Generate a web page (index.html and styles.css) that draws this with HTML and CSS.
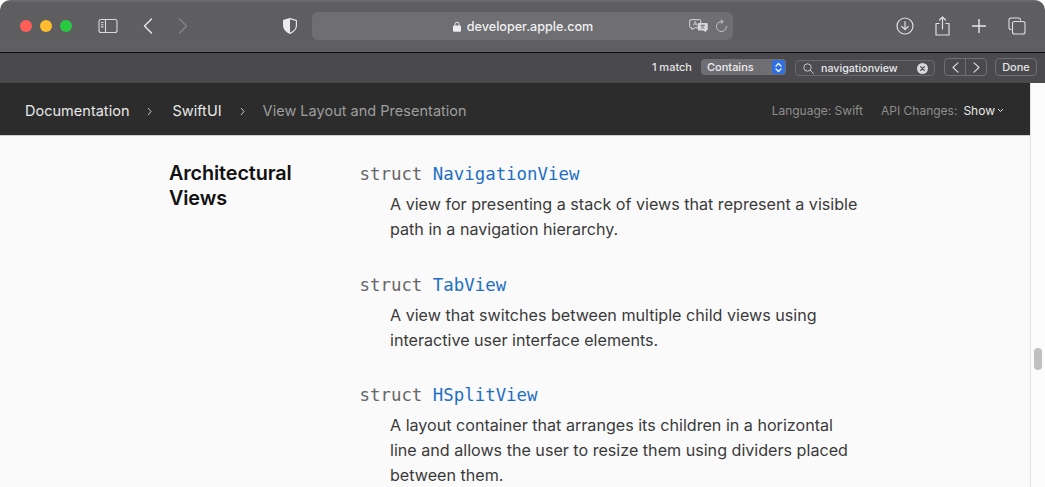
FILE: index.html
```html
<!DOCTYPE html>
<html lang="en">
<head>
<meta charset="utf-8">
<title>NavigationView</title>
<link rel="stylesheet" href="styles.css">
</head>
<body>
<div class="window">
  <header class="titlebar">
    <div class="lights"><span class="light red"></span><span class="light yellow"></span><span class="light green"></span></div>
    <svg class="ic sidebar-ic" width="20" height="16" viewBox="0 0 20 16"><rect x="1" y="1.5" width="18" height="13" rx="2" fill="none" stroke="#d8d8da" stroke-width="1.1"/><path d="M7.5 1.5v13" stroke="#d8d8da" stroke-width="1.1"/><path d="M3 4.5h2.5M3 6.7h2.5M3 8.9h2.5" stroke="#d8d8da" stroke-width="1.1"/></svg>
    <svg class="ic back-ic" width="12" height="18" viewBox="0 0 12 18"><path d="M9.5 2 2.5 9l7 7" fill="none" stroke="#e6e6e8" stroke-width="1.5" stroke-linecap="round" stroke-linejoin="round"/></svg>
    <svg class="ic fwd-ic" width="12" height="18" viewBox="0 0 12 18"><path d="M2.5 2l7 7-7 7" fill="none" stroke="#838386" stroke-width="1.5" stroke-linecap="round" stroke-linejoin="round"/></svg>
    <svg class="ic shield-ic" width="14" height="16" viewBox="0 0 14 16"><path d="M7 .6 13.4 2.4v5.2c0 3.8-3 6.3-6.4 7.8C3.600 13.900.6 11.400.6 7.600V2.400z" fill="none" stroke="#ececee" stroke-width="1.100"/><path d="M7 .6v14.800C3.600 13.900.6 11.400.6 7.600V2.400z" fill="#ececee"/></svg>
    <div class="urlbar">
      <div class="url-center">
        <svg width="8" height="11" viewBox="0 0 8 11"><path d="M2 5V3.200a2 2 0 0 1 4 0V5" fill="none" stroke="#ececee" stroke-width="1"/><rect y="4.600" width="8" height="6.200" rx="1" fill="#ececee"/></svg>
        <span class="url-text">developer.apple.com</span>
      </div>
      <svg class="translate" width="19" height="14" viewBox="0 0 19 14"><path d="M2 .7h8.500a1.300 1.300 0 0 1 1.300 1.300v5.500a1.300 1.300 0 0 1-1.300 1.300H5.500L3 10.800V8.800H2A1.300 1.300 0 0 1 .7 7.500V2A1.300 1.300 0 0 1 2 .7z" fill="none" stroke="#d8d8da" stroke-width="1"/><path d="M4.300 6.500 6.200 2.500 8.100 6.500M5 5.200h2.400" fill="none" stroke="#d8d8da" stroke-width=".8"/><path d="M10 4h7.500a1.300 1.300 0 0 1 1.300 1.300v5a1.300 1.300 0 0 1-1.300 1.300H17v2l-2.500-2H10a1.300 1.300 0 0 1-1.300-1.300v-5A1.300 1.300 0 0 1 10 4z" fill="#d8d8da"/><path d="M11.500 6.300h4.500M13.700 5.500v1M15 6.300c-.4 1.800-1.700 2.800-3.300 3.300M12.300 6.800c.4 1.200 1.500 2.300 3.200 2.800" fill="none" stroke="#6a6a6d" stroke-width=".8"/></svg>
      <svg class="reload" width="13" height="14" viewBox="0 0 13 14"><path d="M7.800 2.700A5 5 0 1 0 11.500 7.500" fill="none" stroke="#c4c4c6" stroke-width="1" stroke-linecap="round"/><path d="M6 .7 8.300 2.700 6 4.700" fill="none" stroke="#c4c4c6" stroke-width="1" stroke-linecap="round" stroke-linejoin="round"/></svg>
    </div>
    <div class="tools">
      <svg class="t-download" width="18" height="18" viewBox="0 0 18 18"><circle cx="9" cy="9" r="8" fill="none" stroke="#e0e0e2" stroke-width="1.200"/><path d="M9 4.500v8M5.800 9.500 9 12.700l3.200-3.200" fill="none" stroke="#e0e0e2" stroke-width="1.200" stroke-linecap="round" stroke-linejoin="round"/></svg>
      <svg class="t-share" width="15" height="20" viewBox="0 0 15 20"><path d="M4.500 7.500H1v11.500h13V7.500h-3.500" fill="none" stroke="#e0e0e2" stroke-width="1.200" stroke-linejoin="round"/><path d="M7.500 13V1M4.500 4 7.500 1l3 3" fill="none" stroke="#e0e0e2" stroke-width="1.200" stroke-linecap="round" stroke-linejoin="round"/></svg>
      <svg class="t-plus" width="14" height="14" viewBox="0 0 14 14"><path d="M7 .5v13M.5 7h13" fill="none" stroke="#e8e8ea" stroke-width="1.400" stroke-linecap="round"/></svg>
      <svg class="t-tabs" width="18" height="18" viewBox="0 0 18 18"><path d="M3.500 12.500H3a2 2 0 0 1-2-2V3a2 2 0 0 1 2-2h7.500a2 2 0 0 1 2 2v.5" fill="none" stroke="#e0e0e2" stroke-width="1.100"/><rect x="4.500" y="4.500" width="12.500" height="12.500" rx="2" fill="none" stroke="#e0e0e2" stroke-width="1.100"/></svg>
    </div>
  </header>
  <div class="findbar">
    <span class="match">1 match</span>
    <div class="select"><span>Contains</span><span class="stepper"><svg width="7" height="11" viewBox="0 0 7 11"><path d="M1 4 3.500 1.500 6 4M1 7l2.500 2.500L6 7" fill="none" stroke="#fff" stroke-width="1.200" stroke-linecap="round" stroke-linejoin="round"/></svg></span></div>
    <div class="search">
      <svg width="11" height="11" viewBox="0 0 11 11"><circle cx="4.500" cy="4.500" r="3.700" fill="none" stroke="#c8c8ca" stroke-width="1"/><path d="m7.300 7.300 3.200 3.200" stroke="#c8c8ca" stroke-width="1" stroke-linecap="round"/></svg>
      <span class="query">navigationview</span>
      <span class="clear"><svg width="11" height="11" viewBox="0 0 11 11"><circle cx="5.500" cy="5.500" r="5.500" fill="#d8d8da"/><path d="m3.600 3.600 3.800 3.800M7.400 3.600 3.600 7.400" stroke="#4c4c50" stroke-width="1.200" stroke-linecap="round"/></svg></span>
    </div>
    <div class="pager">
      <span class="page-btn"><svg width="7" height="11" viewBox="0 0 7 11"><path d="M6 .8 1 5.500l5 4.700" fill="none" stroke="#dcdcde" stroke-width="1.100" stroke-linecap="round" stroke-linejoin="round"/></svg></span>
      <span class="page-btn"><svg width="7" height="11" viewBox="0 0 7 11"><path d="m1 .8 5 4.700-5 4.700" fill="none" stroke="#dcdcde" stroke-width="1.100" stroke-linecap="round" stroke-linejoin="round"/></svg></span>
    </div>
    <span class="done">Done</span>
  </div>
  <div class="viewport">
    <div class="page">
      <nav class="docnav">
        <div class="crumbs">
          <span class="crumb">Documentation</span>
          <svg class="chev first" width="5" height="9" viewBox="0 0 5 9"><path d="m1 1 3 3.500L1 8" fill="none" stroke="#c8c8c8" stroke-width="1"/></svg>
          <span class="crumb swift">SwiftUI</span>
          <svg class="chev" width="5" height="9" viewBox="0 0 5 9"><path d="m1 1 3 3.500L1 8" fill="none" stroke="#c8c8c8" stroke-width="1"/></svg>
          <span class="crumb muted">View Layout and Presentation</span>
        </div>
        <div class="navopts">
          <span class="lang">Language: Swift</span>
          <span class="api">API Changes:</span>
          <span class="show">Show<svg width="7" height="5" viewBox="0 0 7 5"><path d="m1 1 2.500 2.500L6 1" fill="none" stroke="#e8e8e8" stroke-width="1"/></svg></span>
        </div>
      </nav>
      <main class="content">
        <h2 class="section-title">Architectural Views</h2>
        <div class="topics">
          <section class="topic">
            <div class="decl"><span class="kw">struct</span> <a class="sym">NavigationView</a></div>
            <p class="abstract">A view for presenting a stack of views that represent a visible path in a navigation hierarchy.</p>
          </section>
          <section class="topic">
            <div class="decl"><span class="kw">struct</span> <a class="sym">TabView</a></div>
            <p class="abstract">A view that switches between multiple child views using interactive user interface elements.</p>
          </section>
          <section class="topic">
            <div class="decl"><span class="kw">struct</span> <a class="sym">HSplitView</a></div>
            <p class="abstract">A layout container that arranges its children in a horizontal line and allows the user to resize them using dividers placed between them.</p>
          </section>
        </div>
      </main>
    </div>
    <aside class="gutter"><div class="thumb"></div></aside>
  </div>
</div>
</body>
</html>
```

FILE: styles.css
```css
* { box-sizing: border-box; }
html, body { margin: 0; padding: 0; height: 100%; overflow: hidden; background: #fff; }
body { font-family: Inter, "Liberation Sans", sans-serif; }
.window { width: 1045px; height: 487px; display: flex; flex-direction: column; border-radius: 10px 10px 0 0; overflow: hidden; }
.titlebar { height: 53px; flex: none; display: flex; align-items: center; background: linear-gradient(180deg, #6d6d70 0, #5e5e61 3px, #5f5f62 100%); border-bottom: 1px solid #0c0c0c; padding-left: 20px; }
.lights { display: flex; gap: 8px; }
.light { width: 12px; height: 12px; border-radius: 50%; }
.red { background: #fe5f57; }
.yellow { background: #febc2e; }
.green { background: #28c840; }
.ic { flex: none; }
.sidebar-ic { margin-left: 26px; }
.back-ic { margin-left: 24px; }
.fwd-ic { margin-left: 23px; }
.shield-ic { margin-left: 94px; }
.urlbar { width: 421px; height: 28px; margin-left: 15px; border-radius: 6px; background: #6f6f72; display: flex; align-items: center; position: relative; }
.url-center { flex: 1; display: flex; justify-content: center; align-items: center; gap: 6px; margin-left: 1px; }
.url-text { font-size: 12.600px; font-weight: 500; color: #f0f0f2; }
.translate { position: absolute; left: 377px; top: 7px; }
.reload { position: absolute; left: 403px; top: 7px; }
.tools { margin-left: 163px; display: flex; align-items: center; }
.t-share { margin-left: 20.500px; }
.t-plus { margin-left: 22.500px; }
.t-tabs { margin-left: 22px; }
.findbar { height: 30px; flex: none; background: #4a4a4e; display: flex; align-items: center; justify-content: flex-end; padding: 0 8px 2px 0; color: #e4e4e6; font-size: 11px; }
.match { font-weight: 500; margin-right: 9px; }
.select { width: 85px; height: 16px; border-radius: 4px; background: #6f6f73; display: flex; align-items: center; justify-content: space-between; padding: 0 1px 0 6px; font-weight: 500; color: #ececee; margin-right: 9px; }
.stepper { width: 13px; height: 14px; border-radius: 3px; background: #2f6fe0; display: flex; align-items: center; justify-content: center; }
.search { width: 140px; height: 16px; margin-top: 2px; border-radius: 4px; border: 1px solid #69696d; display: flex; align-items: center; padding: 0 6px 0 7px; gap: 7px; background: #4d4d51; }
.query { font-size: 10.700px; font-weight: 500; flex: 1; color: #e8e8ea; }
.clear { display: flex; }
.pager { display: flex; width: 43px; height: 18px; border: 1px solid #707074; border-radius: 4px; margin-left: 9px; }
.page-btn { flex: 1; display: flex; align-items: center; justify-content: center; }
.page-btn + .page-btn { border-left: 1px solid #707074; }
.done { width: 42px; height: 18px; border: 1px solid #707074; border-radius: 4px; margin-left: 8px; display: flex; align-items: center; justify-content: center; font-weight: 500; }
.viewport { flex: 1; display: flex; min-height: 0; background: #fafafa; }
.page { width: 1030px; flex: none; display: flex; flex-direction: column; }
.docnav { height: 53px; flex: none; background: #2c2c2c; border-bottom: 1px solid #cfcfcf; display: flex; align-items: center; justify-content: space-between; padding: 2px 26px 0 25px; }
.crumbs { display: flex; align-items: center; font-size: 14.500px; line-height: 20px; padding-top: 2px; color: #e8e8e8; }
.crumb { letter-spacing: 0.02px; }
.chev { margin: 0 21px 0 18px; }
.chev.first { margin-left: 18px; margin-right: 20px; }
.crumb.muted { color: #9e9e9e; margin-left: -3px; }
.navopts { display: flex; align-items: center; font-size: 12px; color: #8e8e8e; }
.lang { margin-right: 18px; }
.api { margin-right: 6px; }
.show { color: #e8e8e8; display: flex; align-items: center; gap: 2px; }
.content { flex: 1; background: #fafafa; display: flex; padding: 25px 0 0 169px; min-height: 0; overflow: hidden; }
.section-title { width: 191px; flex: none; margin: 0; padding-right: 40px; font-size: 19.800px; line-height: 25px; font-weight: 600; color: #111; letter-spacing: -0.1px; }
.topics { width: 500px; flex: none; display: flex; flex-direction: column; gap: 29.500px; }
.decl { font-family: "DejaVu Sans Mono", "Liberation Mono", monospace; font-size: 17.400px; line-height: 26px; color: #666; white-space: pre; margin-left: -0.500px; }
.sym { color: #1f6fc4; }
.abstract { margin: 5px 0 0; padding-left: 30px; font-size: 16.120px; line-height: 25px; color: #3a3a3a; width: 500px; }
.gutter { flex: 1; background: #fbfbfb; border-left: 1px solid #e2e2e2; display: flex; justify-content: center; align-items: flex-start; padding-top: 265px; }
.thumb { width: 8px; height: 22px; border-radius: 4px; background: #c0c0c0; }
```
